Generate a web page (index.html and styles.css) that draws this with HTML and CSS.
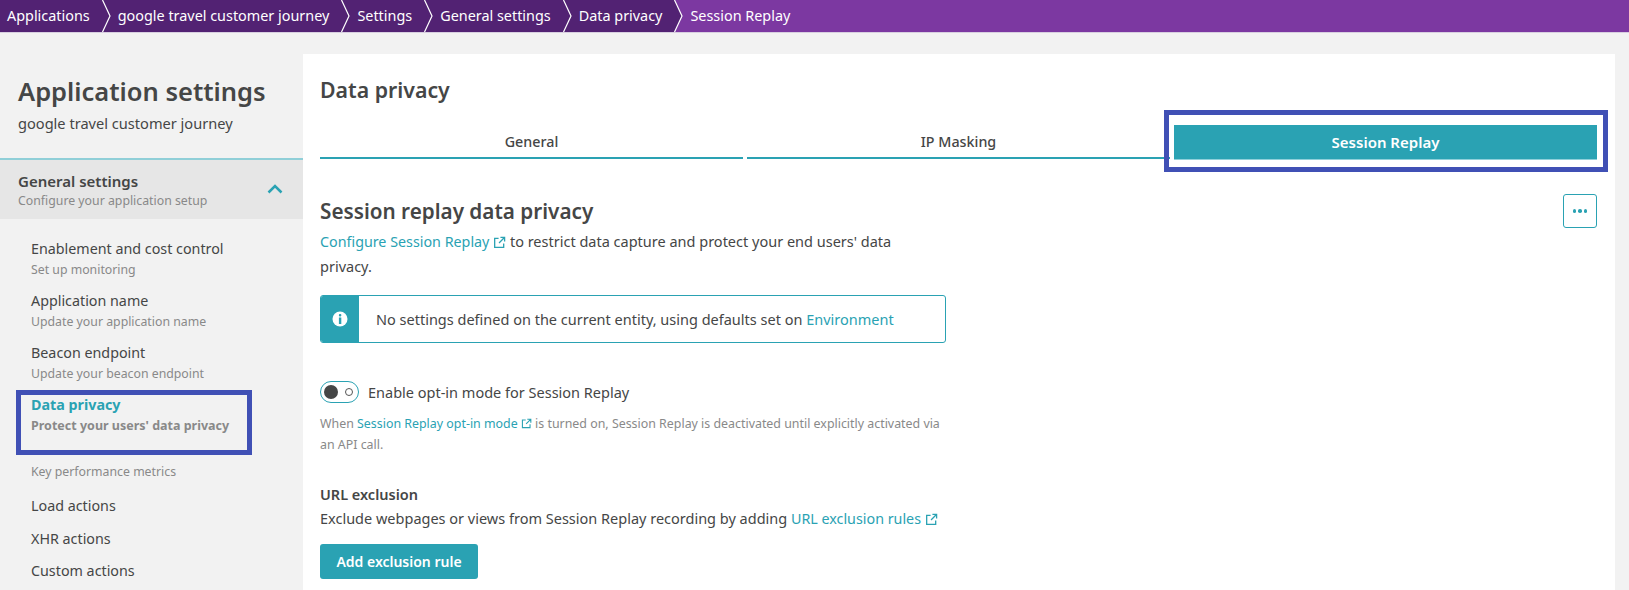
FILE: index.html
```html
<!DOCTYPE html>
<html lang="en">
<head>
<meta charset="utf-8">
<title>Session Replay</title>
<link rel="stylesheet" href="styles.css">
</head>
<body>
<nav class="crumbs">
  <a class="crumb">Applications</a>
  <svg class="chev" viewBox="0 0 10 32"><path d="M1.5 0L9 16L1.5 32" class="chev-line"/></svg>
  <a class="crumb">google travel customer journey</a>
  <svg class="chev" viewBox="0 0 10 32"><path d="M1.5 0L9 16L1.5 32" class="chev-line"/></svg>
  <a class="crumb">Settings</a>
  <svg class="chev" viewBox="0 0 10 32"><path d="M1.5 0L9 16L1.5 32" class="chev-line"/></svg>
  <a class="crumb">General settings</a>
  <svg class="chev" viewBox="0 0 10 32"><path d="M1.5 0L9 16L1.5 32" class="chev-line"/></svg>
  <a class="crumb">Data privacy</a>
  <svg class="chev" viewBox="0 0 10 32"><path d="M1.5 0L9 16L1.5 32L10 32L10 0Z" class="chev-fill"/><path d="M1.5 0L9 16L1.5 32" class="chev-line"/></svg>
  <a class="crumb crumb-active">Session Replay</a>
</nav>
<div class="layout">
  <aside class="side">
    <h1 class="side-title">Application settings</h1>
    <p class="side-sub">google travel customer journey</p>
    <div class="group-head">
      <div>
        <div class="group-name">General settings</div>
        <div class="group-desc">Configure your application setup</div>
      </div>
      <svg class="caret" viewBox="0 0 16 10"><path d="M1.5 8.5L8 2L14.5 8.5"/></svg>
    </div>
    <ul class="menu">
      <li class="item"><div class="item-name">Enablement and cost control</div><div class="item-desc">Set up monitoring</div></li>
      <li class="item"><div class="item-name">Application name</div><div class="item-desc">Update your application name</div></li>
      <li class="item"><div class="item-name">Beacon endpoint</div><div class="item-desc">Update your beacon endpoint</div></li>
      <li class="item item-active"><div class="item-name">Data privacy</div><div class="item-desc">Protect your users' data privacy</div></li>
      <li class="menu-label">Key performance metrics</li>
      <li class="plain">Load actions</li>
      <li class="plain">XHR actions</li>
      <li class="plain">Custom actions</li>
    </ul>
  </aside>
  <main class="panel">
    <h2 class="panel-title">Data privacy</h2>
    <div class="tabs">
      <div class="tab">General</div>
      <div class="tab">IP Masking</div>
      <div class="tab tab-active">Session Replay</div>
    </div>
    <button class="more" aria-label="More"><span class="dot"></span><span class="dot"></span><span class="dot"></span></button>
    <h3 class="section-title">Session replay data privacy</h3>
    <p class="lead"><a class="link link-tight">Configure Session Replay <svg class="ext" viewBox="0 0 14 14"><path d="M6 2.5H1.8V12.2H11.5V8M8 1.5H12.5V6M12.3 1.7L6.5 7.5"/></svg></a> to restrict data capture and protect your end users' data privacy.</p>
    <div class="info">
      <div class="info-icon"><svg viewBox="0 0 16 16"><circle cx="8" cy="8" r="7.5" class="info-disc"/><rect x="6.9" y="3" width="2.4" height="2.4" rx="1" class="info-mark"/><rect x="6.9" y="6.5" width="2.4" height="6.5" class="info-mark"/></svg></div>
      <div class="info-text">No settings defined on the current entity, using defaults set on <a class="link">Environment</a></div>
    </div>
    <div class="switch-row">
      <span class="switch"><span class="knob"></span><span class="ring"></span></span>
      <span class="switch-label">Enable opt-in mode for Session Replay</span>
    </div>
    <p class="hint">When <a class="link">Session Replay opt-in mode <svg class="ext ext-small" viewBox="0 0 14 14"><path d="M6 2.5H1.8V12.2H11.5V8M8 1.5H12.5V6M12.3 1.7L6.5 7.5"/></svg></a> is turned on, Session Replay is deactivated until explicitly activated via an API call.</p>
    <h4 class="sub-title">URL exclusion</h4>
    <p class="sub-text">Exclude webpages or views from Session Replay recording by adding <a class="link link-tight">URL exclusion rules <svg class="ext" viewBox="0 0 14 14"><path d="M6 2.5H1.8V12.2H11.5V8M8 1.5H12.5V6M12.3 1.7L6.5 7.5"/></svg></a></p>
    <button class="primary">Add exclusion rule</button>
  </main>
</div>
</body>
</html>
```

FILE: styles.css
```css
*, *::before, *::after { box-sizing: border-box; }
html, body { margin: 0; height: 590px; overflow: hidden; }
body {
  background: #f2f2f2;
  color: #454646;
  font-family: "Noto Sans", "Open Sans", sans-serif;
  font-size: 14px;
}
.crumbs {
  display: flex;
  align-items: center;
  height: 33px;
  background: #522273;
  border-bottom: 1px solid #d8cfe0;
  color: #fff;
  font-size: 14.4px;
  padding-left: 7px;
}
.crumb { padding: 0 8px 0 0; white-space: nowrap; line-height: 32px; }
.chev { width: 10px; height: 32px; flex: none; margin: 0 7px 0 3px; }
.chev-line { fill: none; stroke: #fff; stroke-width: 1.2; }
.chev-fill { fill: #7c38a1; }
.crumb-active { flex: 1; background: #7c38a1; margin-left: -7px; padding-left: 7px; }

.layout { display: flex; padding-top: 21px; align-items: flex-start; }

.side { width: 303px; flex: none; }
.side-title { margin: 19px 0 0 18px; font-size: 25.5px; line-height: 36px; font-weight: 600; }
.side-sub { margin: 4px 0 0 18px; font-size: 14.6px; line-height: 20px; }
.group-head {
  margin-top: 25px;
  height: 61px;
  background: #e6e6e6;
  border-top: 2px solid #90cfd8;
  padding: 11px 18px 0;
  display: flex;
  justify-content: space-between;
  align-items: flex-start;
}
.group-name { font-size: 15px; font-weight: 600; line-height: 20px; }
.group-desc { font-size: 12.3px; line-height: 18px; color: #898989; margin-top: 1px; }
.caret { width: 16px; height: 10px; margin: 13px 2px 0 0; }
.caret path { fill: none; stroke: #2aa2b3; stroke-width: 2.5; }

.menu { list-style: none; margin: 0; padding: 20px 0 0 31px; }
.item { height: 52px; }
.item-name { font-size: 14.3px; line-height: 20px; }
.item-desc { font-size: 12.3px; line-height: 20px; margin-top: 1px; color: #898989; }
.item-active { position: relative; }
.item-active::after {
  content: "";
  position: absolute;
  left: -15px;
  top: -5px;
  width: 236px;
  height: 65px;
  border: 5px solid #4050b5;
}
.item-active .item-name { color: #2aa2b3; font-weight: 700; }
.item-active .item-desc { font-weight: 700; font-size: 12.5px; }
.menu-label { font-size: 12.3px; line-height: 20px; color: #898989; margin-top: 15px; margin-bottom: 14px; }
.plain { font-size: 14.3px; line-height: 20px; margin-bottom: 12.5px; }

.panel {
  width: 1312px;
  height: 540px;
  background: #fff;
  padding: 0 17px;
  position: relative;
}
.panel-title { margin: 21px 0 0; font-size: 21.3px; line-height: 30px; font-weight: 600; }
.tabs { display: grid; grid-template-columns: repeat(3, 1fr); gap: 4px; margin-top: 20px; width: 1277px; align-items: start; }
.tab {
  height: 34px;
  text-align: center;
  font-size: 14.3px;
  font-weight: 500;
  line-height: 34px;
  border-bottom: 2px solid #2aa2b3;
}
.tab-active { position: relative; height: 35px; background: #2aa2b3; color: #fff; font-size: 15px; font-weight: 600; line-height: 35px; border-bottom: 1px solid #8fd0da; }
.tab-active::after {
  content: "";
  position: absolute;
  left: -10px;
  right: -11px;
  top: -15px;
  bottom: -13px;
  border: 5px solid #4050b5;
}
.more {
  position: absolute;
  left: 1260px;
  top: 140px;
  width: 34px;
  height: 34px;
  background: #fff;
  border: 1px solid #2aa2b3;
  border-radius: 3px;
  display: flex;
  align-items: center;
  justify-content: center;
  gap: 2px;
  padding: 0;
}
.dot { width: 3.5px; height: 3.5px; border-radius: 50%; background: #2aa2b3; }
.section-title { margin: 36px 0 3px; font-size: 20.7px; line-height: 30px; font-weight: 600; }
.lead { margin: 0; width: 626px; font-size: 14.5px; line-height: 24px; }
.link { color: #2aa2b3; }
.link-tight { font-size: 14.3px; }
.ext { width: 13px; height: 13px; vertical-align: -2px; }
.ext-small { width: 11px; height: 11px; vertical-align: -1px; }
.ext path { fill: none; stroke: #2aa2b3; stroke-width: 1.4; }
.info {
  display: flex;
  width: 626px;
  height: 48px;
  margin-top: 17px;
  border: 1px solid #2aa2b3;
  border-radius: 3px;
  overflow: hidden;
}
.info-icon { width: 38px; background: #2aa2b3; display: flex; align-items: center; justify-content: center; }
.info-icon svg { width: 16px; height: 16px; }
.info-disc { fill: #fff; }
.info-mark { fill: #2aa2b3; }
.info-text { padding-left: 17px; line-height: 46px; font-size: 14.5px; }
.switch-row { display: flex; align-items: center; margin-top: 38px; }
.switch {
  width: 39px;
  height: 22px;
  border: 1px solid #2aa2b3;
  border-radius: 11px;
  display: flex;
  align-items: center;
  padding-left: 3px;
  gap: 7px;
}
.knob { width: 14px; height: 14px; border-radius: 50%; background: #454646; }
.ring { width: 8px; height: 8px; border-radius: 50%; border: 1px solid #555; }
.switch-label { margin-left: 9px; font-size: 14.5px; }
.hint { margin: 10px 0 0; width: 626px; font-size: 12.4px; line-height: 21px; color: #898989; }
.sub-title { margin: 27px 0 0; font-size: 14.5px; line-height: 24px; font-weight: 600; }
.sub-text { margin: 0; font-size: 14.5px; line-height: 24px; }
.primary {
  margin-top: 13px;
  width: 158px;
  height: 35px;
  background: #2aa2b3;
  border: 0;
  border-radius: 3px;
  color: #fff;
  font: 600 14px "Noto Sans", sans-serif;
  padding: 0;
}
```
